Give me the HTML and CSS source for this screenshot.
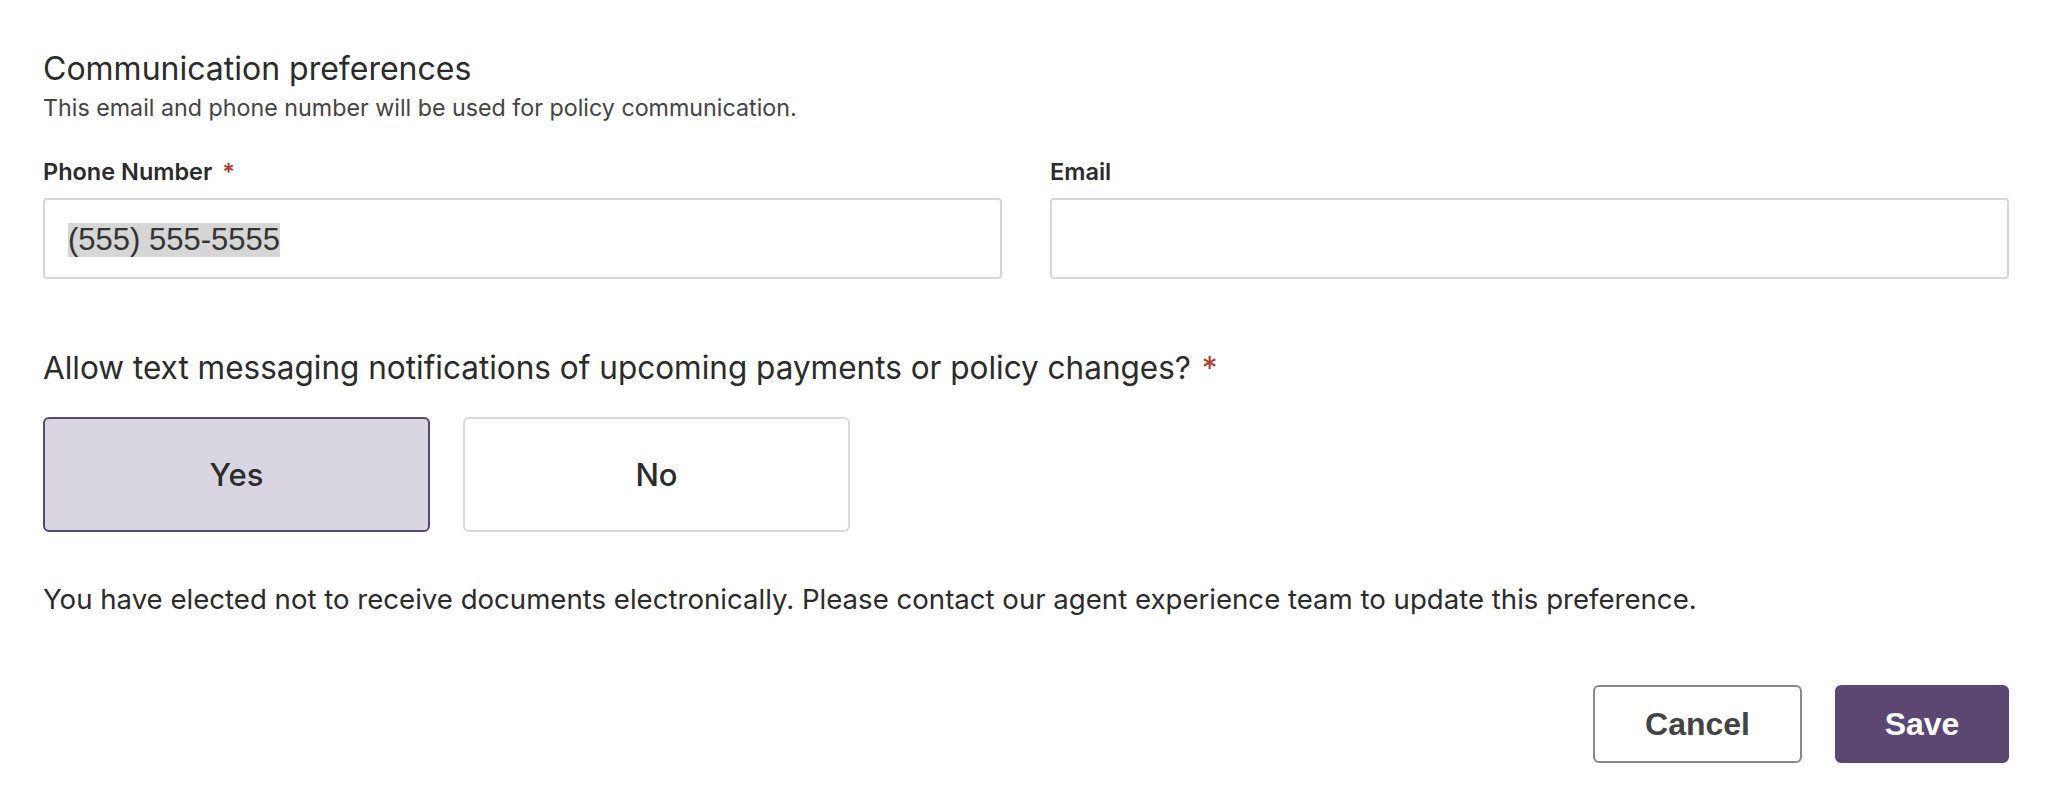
FILE: index.html
```html
<!DOCTYPE html>
<html lang="en">
<head>
<meta charset="utf-8">
<title>Communication preferences</title>
<link rel="stylesheet" href="styles.css">
</head>
<body>
<form class="prefs">
  <h2 class="prefs-title">Communication preferences</h2>
  <p class="prefs-subtitle">This email and phone number will be used for policy communication.</p>

  <div class="fields">
    <div class="field">
      <label class="field-label">Phone Number <span class="req">*</span></label>
      <div class="input"><span class="input-value">(555) 555-5555</span></div>
    </div>
    <div class="field">
      <label class="field-label">Email</label>
      <div class="input"></div>
    </div>
  </div>

  <p class="question">Allow text messaging notifications of upcoming payments or policy changes? <span class="req">*</span></p>
  <div class="choices">
    <button type="button" class="choice choice-selected">Yes</button>
    <button type="button" class="choice">No</button>
  </div>

  <p class="notice">You have elected not to receive documents electronically. Please contact our agent experience team to update this preference.</p>

  <div class="actions">
    <button type="button" class="btn btn-secondary">Cancel</button>
    <button type="button" class="btn btn-primary">Save</button>
  </div>
</form>
</body>
</html>
```

FILE: styles.css
```css
* { box-sizing: border-box; }

html, body {
  margin: 0;
  padding: 0;
  background: #ffffff;
}

body {
  font-family: "Inter", "Lato", "Liberation Sans", sans-serif;
  color: #2b2b2b;
  font-variant-ligatures: none;
}

.prefs {
  padding: 50px 39px 0 43px;
}

.prefs-title {
  margin: 0;
  font-size: 32px;
  line-height: 37px;
  font-weight: 400;
  color: #2b2b2b;
}

.prefs-subtitle {
  margin: 7px 0 0;
  font-size: 23.25px;
  line-height: 28px;
  color: #444444;
}

.fields {
  display: grid;
  grid-template-columns: 1fr 1fr;
  column-gap: 48px;
  margin-top: 35px;
}

.field-label {
  display: block;
  font-size: 23.5px;
  line-height: 29px;
  font-weight: 600;
  color: #2b2b2b;
}

.req {
  color: #b2362b;
  margin-left: 4px;
}

.input {
  margin-top: 12px;
  height: 81px;
  border: 2px solid #d7d7d7;
  border-radius: 4px;
  display: flex;
  align-items: center;
  padding-left: 23px;
  padding-top: 2px;
}

.input-value {
  font-family: "Liberation Sans", Arial, sans-serif;
  font-size: 31px;
  line-height: 34px;
  color: #333333;
  background: #d6d6d6;
}

.question {
  margin: 70px 0 0;
  font-size: 31.5px;
  line-height: 38px;
  font-weight: 400;
  color: #2b2b2b;
}

.question .req {
  margin-left: 2px;
}

.choices {
  display: flex;
  gap: 33px;
  margin-top: 30px;
}

.choice {
  width: 387px;
  height: 115px;
  border: 2px solid #dadada;
  border-radius: 6px;
  background: #ffffff;
  font-family: "Inter", "Lato", "Liberation Sans", sans-serif;
  font-size: 31px;
  font-weight: 500;
  color: #2b2b2b;
  padding: 0;
}

.choice-selected {
  background: #d9d5e0;
  border-color: #5a4676;
}

.notice {
  margin: 50px 0 0;
  font-size: 27.6px;
  line-height: 34px;
  color: #2b2b2b;
}

.actions {
  display: flex;
  justify-content: flex-end;
  gap: 33px;
  margin-top: 69px;
}

.btn {
  height: 78px;
  border-radius: 6px;
  font-family: "Liberation Sans", Arial, sans-serif;
  font-size: 32px;
  font-weight: 700;
  padding: 0;
}

.btn-secondary {
  width: 209px;
  background: #ffffff;
  border: 2px solid #888888;
  color: #444444;
}

.btn-primary {
  width: 174px;
  background: #5c4773;
  border: 2px solid #5c4773;
  color: #ffffff;
}
```
